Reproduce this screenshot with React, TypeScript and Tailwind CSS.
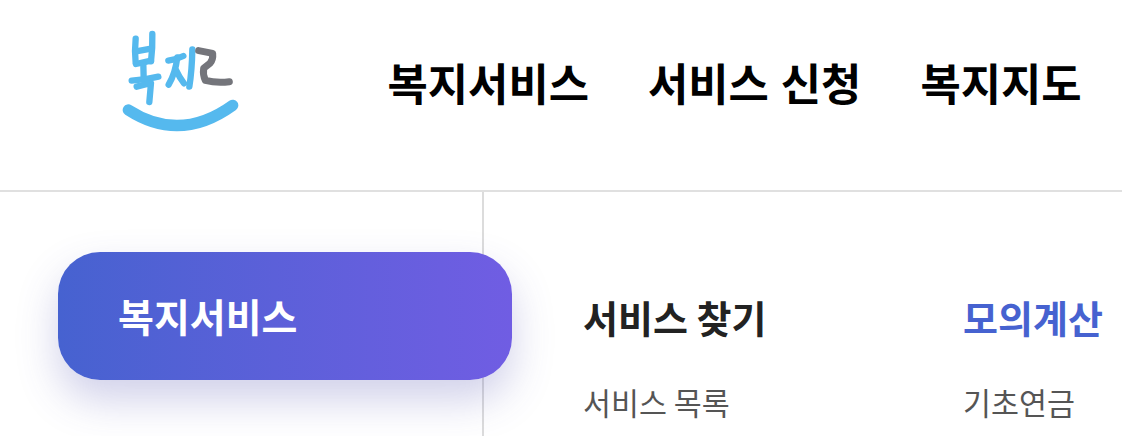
const font = { fontFamily: '"Noto Sans CJK KR", "Noto Sans", sans-serif' };

function Logo() {
  return (
    <svg width="160" height="120" viewBox="0 0 480 360" fill="none" strokeLinecap="round" strokeLinejoin="round" className="shrink-0 blur-[0.5px]">
      <g stroke="#55b9ee" strokeWidth="19">
        <path d="M107 56 Q103 95 107 129" />
        <path d="M157 42 Q158 85 153 124" />
        <path d="M108 94 L153 86" />
        <path d="M108 132 L153 122" />
        <path d="M130 134 L131 174" />
        <path d="M95 182 Q135 180 175 170" />
        <path d="M110 200 L153 189 L148 246" />
        <path d="M205 122 Q230 118 250 108" />
        <path d="M232 112 Q226 160 206 194" />
        <path d="M228 150 Q238 172 252 190" />
        <path d="M277 88 Q276 150 268 200" />
      </g>
      <path d="M296 92 L338 100 Q340 118 330 130 L311 145 Q308 165 316 181 Q350 190 388 185" stroke="#74757b" strokeWidth="21" />
      <path d="M85 270 Q240 370 398 256" stroke="#55b9ee" strokeWidth="34" />
    </svg>
  );
}

export default function App() {
  return (
    <div className="w-[1122px] h-[436px] overflow-hidden bg-white" style={font}>
      <header className="h-[192px] border-b-2 border-[#e0e0e0] flex items-start pl-[100px]">
        <div className="mt-5">
          <Logo />
        </div>
        <nav className="flex gap-[59px] ml-[127.5px] mt-[50px] text-[43.8px] leading-[64px] font-bold text-black whitespace-nowrap [word-spacing:2px]">
          <span>복지서비스</span>
          <span>서비스 신청</span>
          <span>복지지도</span>
        </nav>
      </header>
      <div className="flex">
        <aside className="w-[484px] h-[244px] shrink-0 border-r-2 border-[#dcdcdc] pt-[60px] pl-[58px]">
          <div className="relative w-[454px] h-[128px] rounded-[42px] bg-gradient-to-r from-[#4662d0] to-[#705de3] shadow-[0_20px_40px_rgba(70,70,170,0.25)] flex items-center pl-[60px] text-[39px] font-bold text-white">
            <span className="-mt-0.5">복지서비스</span>
          </div>
        </aside>
        <div className="flex pl-[99px] pt-[97px]">
          <div className="w-[380px]">
            <div className="text-[38px] leading-[56px] font-bold text-[#222]">서비스 찾기</div>
            <div className="mt-[35px] text-[30.4px] leading-[44px] text-[#555]">서비스 목록</div>
          </div>
          <div>
            <div className="text-[38px] leading-[56px] font-bold text-[#4662d0]">모의계산</div>
            <div className="mt-[35px] text-[30.4px] leading-[44px] text-[#555]">기초연금</div>
          </div>
        </div>
      </div>
    </div>
  );
}
